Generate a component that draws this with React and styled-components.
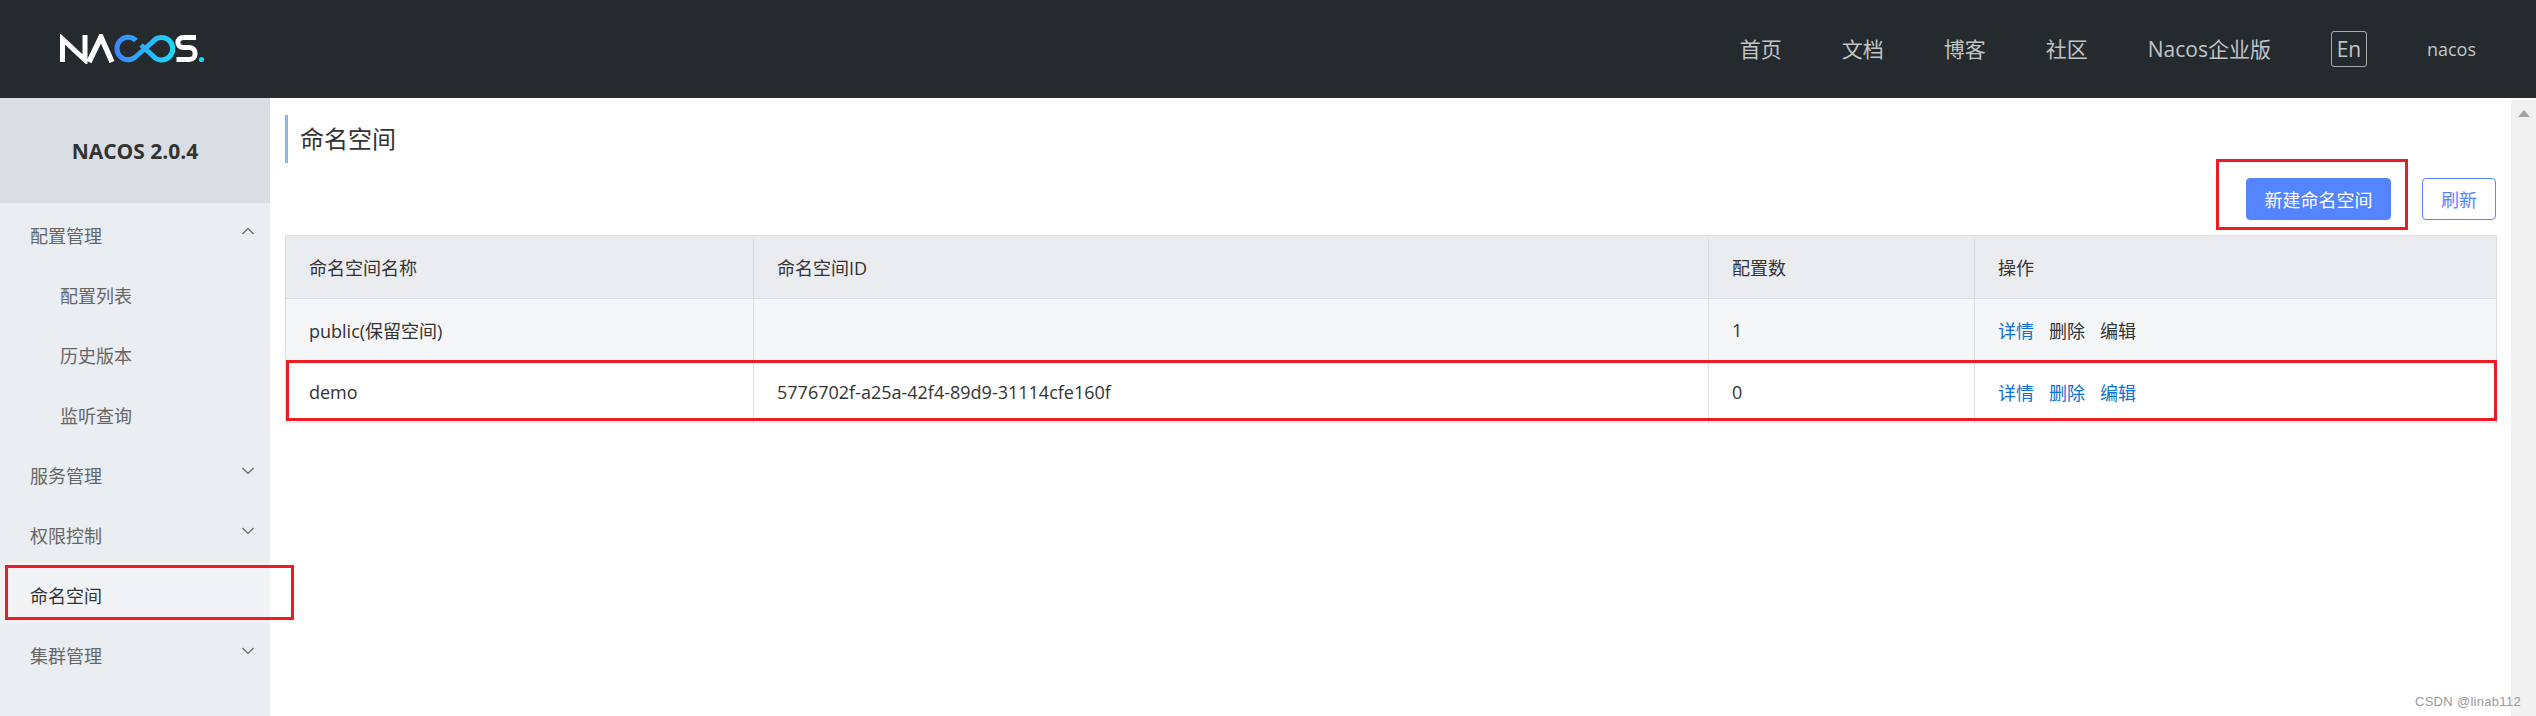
import React from 'react';
import styled, { createGlobalStyle } from 'styled-components';

const Global = createGlobalStyle`
  html, body { margin: 0; padding: 0; background: #fff; overflow: hidden; }
  * { box-sizing: border-box; }
  body { font-family: "Open Sans", "Noto Sans CJK SC", sans-serif; color: #333; }
`;

const Page = styled.div`
  position: relative;
  width: 2536px;
  height: 716px;
  overflow: hidden;
  display: flex;
  flex-direction: column;
`;

const Header = styled.header`
  height: 98px;
  flex: none;
  background: #252a2f;
  display: flex;
  align-items: center;
  justify-content: space-between;
  padding: 0 60px;
`;

const Nav = styled.nav`
  display: flex;
  align-items: center;
  gap: 60px;
`;

const NavLink = styled.span`
  font-size: 21px;
  line-height: 30px;
  color: #c2c4c5;
  white-space: nowrap;
`;

const LangButton = styled.span`
  width: 36px;
  height: 36px;
  border: 1px solid #a8aaac;
  border-radius: 3px;
  display: flex;
  align-items: center;
  justify-content: center;
  font-size: 21px;
  color: #c2c4c5;
`;

const UserName = styled.span`
  font-size: 18px;
  color: #c2c4c5;
`;

const Body = styled.div`
  flex: 1;
  display: flex;
  min-height: 0;
`;

const Sidebar = styled.aside`
  width: 270px;
  flex: none;
  background: #eaedf1;
`;

const Version = styled.div`
  height: 105px;
  background: #d9dee4;
  display: flex;
  align-items: center;
  justify-content: center;
  font-size: 21px;
  font-weight: 700;
  color: #333;
`;

const MenuRow = styled.div`
  height: 60px;
  display: flex;
  align-items: center;
  justify-content: space-between;
  padding: ${p => (p.$sub ? '4px 15px 0 60px' : '4px 15px 0 30px')};
  font-size: 18px;
  color: ${p => (p.$active ? '#333' : '#666')};
  background: ${p => (p.$active ? '#f2f3f7' : 'transparent')};
`;

const ChevronIcon = styled.svg`
  width: 14px;
  height: 10px;
  margin-top: -8px;
  fill: none;
  stroke: #666;
  stroke-width: 1.2;
`;

const Main = styled.main`
  flex: 1;
  min-width: 0;
  padding: 17px 15px 0;
`;

const Title = styled.h1`
  margin: 0;
  height: 48px;
  border-left: 3px solid #88b7e0;
  padding-left: 12px;
  font-size: 24px;
  font-weight: 400;
  line-height: 48px;
  color: #333;
`;

const Toolbar = styled.div`
  display: flex;
  justify-content: flex-end;
  gap: 31px;
  margin-top: 15px;
`;

const Button = styled.button`
  height: 42px;
  width: ${p => (p.$primary ? '145px' : '74px')};
  padding: 0;
  border: 1px solid #5584ff;
  border-radius: 4px;
  background: ${p => (p.$primary ? '#5584ff' : '#fff')};
  color: ${p => (p.$primary ? '#fff' : '#5584ff')};
  font-family: inherit;
  font-size: 18px;
`;

const Table = styled.table`
  width: 2211px;
  margin-top: 15px;
  border-collapse: collapse;
  table-layout: fixed;
  font-size: 18px;
  color: #333;
`;

const Th = styled.th`
  height: 63px;
  padding: 0 23px;
  background: #ebecf0;
  border: 1.5px solid #dcdee3;
  font-weight: 400;
  text-align: left;
`;

const Td = styled.td`
  height: ${p => (p.$tall ? '62px' : '62px')};
  padding: 0 23px;
  background: ${p => (p.$shade ? '#f4f6f8' : '#fff')};
  border: 1.5px solid #dcdee3;
`;

const Action = styled.span`
  margin-right: 15px;
  color: ${p => (p.$muted ? '#333' : '#0f6fd4')};
`;

const Scrollbar = styled.div`
  width: 25px;
  flex: none;
  margin-top: 2px;
  background: #f1f1f1;
  display: flex;
  justify-content: center;
  padding-top: 10px;
`;

const ArrowUp = styled.span`
  width: 0;
  height: 0;
  border-left: 6px solid transparent;
  border-right: 6px solid transparent;
  border-bottom: 7px solid #a3a3a3;
`;

const Annotation = styled.div`
  position: absolute;
  left: ${p => p.$x}px;
  top: ${p => p.$y}px;
  width: ${p => p.$w}px;
  height: ${p => p.$h}px;
  border: 3px solid #ed1c24;
  pointer-events: none;
`;

const Watermark = styled.div`
  position: absolute;
  right: 15px;
  bottom: 7px;
  font-family: "Liberation Sans", Arial, sans-serif;
  font-size: 13px;
  letter-spacing: 0.3px;
  color: #9a9a9a;
`;

const Logo = () => (
  <svg width="146" height="30" viewBox="0 0 146 30" aria-label="NACOS logo">
    <defs>
      <linearGradient id="nacosLoop" x1="54" x2="116" y1="0" y2="0" gradientUnits="userSpaceOnUse">
        <stop offset="0" stopColor="#3a84ff" />
        <stop offset="1" stopColor="#1bdcf6" />
      </linearGradient>
    </defs>
    <path d="M2.5 28V5L25 26V1" fill="none" stroke="#fff" strokeWidth="5" />
    <path d="M29 28L41 3L52 28" fill="none" stroke="#fff" strokeWidth="5.4" />
    <path
      d="M76 6.5A11.2 11.2 0 1 0 76 22.5L93 7.5A11.2 11.2 0 1 1 93 22L81 11"
      fill="none"
      stroke="url(#nacosLoop)"
      strokeWidth="5"
    />
    <path
      d="M136 3.5H123.5C116 3.5 116 13.5 123.5 13.5H129.5C137 13.5 137 25.5 129.5 25.5H116.5"
      fill="none"
      stroke="#fff"
      strokeWidth="5"
    />
    <circle cx="141.5" cy="25.5" r="2.6" fill="#1bd3ee" />
  </svg>
);

const Chevron = ({ up }) => (
  <ChevronIcon viewBox="0 0 14 10">
    <path d={up ? 'M1.5 8L7 2.5L12.5 8' : 'M1.5 2L7 7.5L12.5 2'} />
  </ChevronIcon>
);

const menu = [
  { label: '配置管理', up: true },
  { label: '配置列表', sub: true },
  { label: '历史版本', sub: true },
  { label: '监听查询', sub: true },
  { label: '服务管理', down: true },
  { label: '权限控制', down: true },
  { label: '命名空间', active: true },
  { label: '集群管理', down: true },
];

export default function App() {
  return (
    <Page>
      <Global />
      <Header>
        <Logo />
        <Nav>
          <NavLink>首页</NavLink>
          <NavLink>文档</NavLink>
          <NavLink>博客</NavLink>
          <NavLink>社区</NavLink>
          <NavLink>Nacos企业版</NavLink>
          <LangButton>En</LangButton>
          <UserName>nacos</UserName>
        </Nav>
      </Header>
      <Body>
        <Sidebar>
          <Version>NACOS 2.0.4</Version>
          {menu.map(m => (
            <MenuRow key={m.label} $sub={m.sub} $active={m.active}>
              {m.label}
              {(m.up || m.down) && <Chevron up={m.up} />}
            </MenuRow>
          ))}
        </Sidebar>
        <Main>
          <Title>命名空间</Title>
          <Toolbar>
            <Button $primary>新建命名空间</Button>
            <Button>刷新</Button>
          </Toolbar>
          <Table>
            <colgroup>
              <col width="468" />
              <col width="955" />
              <col width="266" />
              <col width="522" />
            </colgroup>
            <thead>
              <tr>
                <Th>命名空间名称</Th>
                <Th>命名空间ID</Th>
                <Th>配置数</Th>
                <Th>操作</Th>
              </tr>
            </thead>
            <tbody>
              <tr>
                <Td $shade>public(保留空间)</Td>
                <Td $shade />
                <Td $shade>1</Td>
                <Td $shade>
                  <Action>详情</Action>
                  <Action $muted>删除</Action>
                  <Action $muted>编辑</Action>
                </Td>
              </tr>
              <tr>
                <Td>demo</Td>
                <Td>5776702f-a25a-42f4-89d9-31114cfe160f</Td>
                <Td>0</Td>
                <Td>
                  <Action>详情</Action>
                  <Action>删除</Action>
                  <Action>编辑</Action>
                </Td>
              </tr>
            </tbody>
          </Table>
        </Main>
        <Scrollbar>
          <ArrowUp />
        </Scrollbar>
      </Body>
      <Annotation $x={5} $y={565} $w={289} $h={55} />
      <Annotation $x={2216} $y={159} $w={192} $h={71} />
      <Annotation $x={286} $y={360} $w={2211} $h={61} />
      <Watermark>CSDN @linab112</Watermark>
    </Page>
  );
}
